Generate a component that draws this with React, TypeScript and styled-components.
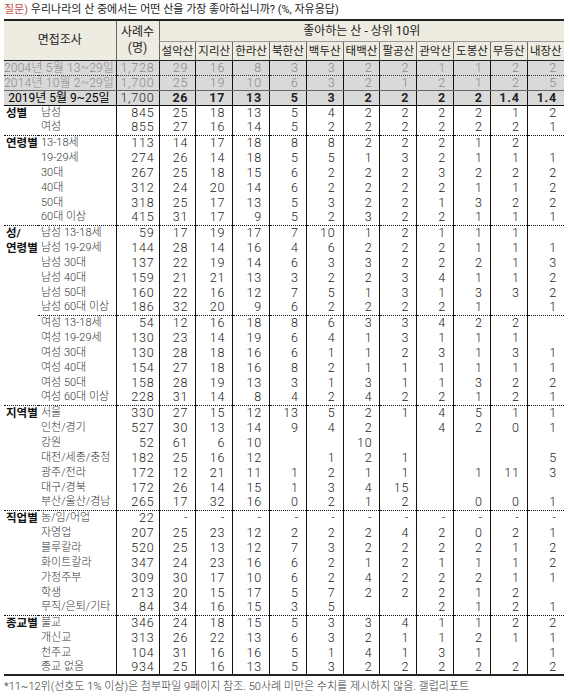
import styled, { createGlobalStyle } from "styled-components";

const GlobalStyle = createGlobalStyle`
  html, body {
    margin: 0;
    padding: 0;
    background: #fff;
  }
  body {
    font-family: Roboto, "Noto Sans CJK KR", sans-serif;
    color: #222;
  }
`;

const mountains = ["설악산", "지리산", "한라산", "북한산", "백두산", "태백산", "팔공산", "관악산", "도봉산", "무등산", "내장산"];

type Sep = "none" | "dot" | "dotSub";

interface DataRow {
  g?: string;
  s: string;
  n: string;
  v: string;
  sep?: Sep;
}

const trend = [
  { label: "2004년 5월 13~29일", n: "1,728", v: "29 16 8 3 3 2 2 1 1 2 2" },
  { label: "2014년 10월 2~29일", n: "1,700", v: "25 19 10 6 3 2 1 2 1 2 5" },
];

const current = { label: "2019년 5월 9~25일", n: "1,700", v: "26 17 13 5 3 2 2 2 2 1.4 1.4" };

const rows: DataRow[] = [
  { g: "성별", s: "남성", n: "845", v: "25 18 13 5 4 2 2 2 2 1 2" },
  { s: "여성", n: "855", v: "27 16 14 5 2 2 2 2 2 2 1" },
  { g: "연령별", s: "13-18세", n: "113", v: "14 17 18 8 8 2 2 2 1 2 _", sep: "dot" },
  { s: "19-29세", n: "274", v: "26 14 18 5 5 1 3 2 1 1 1" },
  { s: "30대", n: "267", v: "25 18 15 6 2 2 2 3 2 2 2" },
  { s: "40대", n: "312", v: "24 20 14 6 2 2 2 2 1 1 2" },
  { s: "50대", n: "318", v: "25 17 13 5 3 2 2 1 3 2 2" },
  { s: "60대 이상", n: "415", v: "31 17 9 5 2 3 2 2 1 1 1" },
  { g: "성/", s: "남성 13-18세", n: "59", v: "17 19 17 7 10 1 2 1 1 1 _", sep: "dot" },
  { g: "연령별", s: "남성 19-29세", n: "144", v: "28 14 16 4 6 2 2 2 1 1 1" },
  { s: "남성 30대", n: "137", v: "22 19 14 6 3 3 2 2 2 1 3" },
  { s: "남성 40대", n: "159", v: "21 21 13 3 2 2 3 4 1 1 2" },
  { s: "남성 50대", n: "160", v: "22 16 12 7 5 1 3 1 3 3 2" },
  { s: "남성 60대 이상", n: "186", v: "32 20 9 6 2 2 2 2 1 _ 1" },
  { s: "여성 13-18세", n: "54", v: "12 16 18 8 6 3 3 4 2 2 _", sep: "dotSub" },
  { s: "여성 19-29세", n: "130", v: "23 14 19 6 4 1 3 1 1 1 _" },
  { s: "여성 30대", n: "130", v: "28 18 16 6 1 1 2 3 1 3 1" },
  { s: "여성 40대", n: "154", v: "27 18 16 8 2 1 1 1 1 1 1" },
  { s: "여성 50대", n: "158", v: "28 19 13 3 1 3 1 1 3 2 2" },
  { s: "여성 60대 이상", n: "228", v: "31 14 8 4 2 4 2 2 1 2 1" },
  { g: "지역별", s: "서울", n: "330", v: "27 15 12 13 5 2 1 4 5 1 1", sep: "dot" },
  { s: "인천/경기", n: "527", v: "30 13 14 9 4 2 _ 4 2 0 1" },
  { s: "강원", n: "52", v: "61 6 10 _ _ 10 _ _ _ _ _" },
  { s: "대전/세종/충청", n: "182", v: "25 16 12 _ 1 2 1 _ _ _ 5" },
  { s: "광주/전라", n: "172", v: "12 21 11 1 2 1 1 _ 1 11 3" },
  { s: "대구/경북", n: "172", v: "26 14 15 1 3 4 15 _ _ _ _" },
  { s: "부산/울산/경남", n: "265", v: "17 32 16 0 2 1 2 _ 0 0 1" },
  { g: "직업별", s: "농/임/어업", n: "22", v: "- - - - - - - - - - -", sep: "dot" },
  { s: "자영업", n: "207", v: "25 23 12 2 2 2 4 2 0 2 1" },
  { s: "블루칼라", n: "520", v: "25 13 12 7 3 2 2 2 2 1 2" },
  { s: "화이트칼라", n: "347", v: "24 23 16 6 2 1 2 1 1 1 2" },
  { s: "가정주부", n: "309", v: "30 17 10 6 2 4 2 2 2 1 1" },
  { s: "학생", n: "213", v: "20 15 17 5 7 2 2 2 1 2 _" },
  { s: "무직/은퇴/기타", n: "84", v: "34 16 15 3 5 _ _ 2 1 2 1" },
  { g: "종교별", s: "불교", n: "346", v: "24 18 15 5 3 3 4 1 1 2 2", sep: "dot" },
  { s: "개신교", n: "313", v: "26 22 13 6 3 2 1 1 2 1 1" },
  { s: "천주교", n: "104", v: "31 16 16 5 1 4 1 3 1 _ 1" },
  { s: "종교 없음", n: "934", v: "25 16 13 5 3 2 2 2 2 2 2" },
];

const cells = (v: string) => v.split(" ").map((x) => (x === "_" ? "" : x));

const Page = styled.div`
  width: 568px;
  padding: 0 4px;
  box-sizing: border-box;
`;

const Title = styled.div`
  height: 19px;
  line-height: 19px;
  font-size: 11px;
  color: #222;
  white-space: nowrap;
`;

const Question = styled.span`
  color: #c0504d;
`;

const Table = styled.table`
  width: 560px;
  table-layout: fixed;
  border-collapse: collapse;
  border-top: 2px solid #222;
  border-bottom: 2px solid #222;
`;

const HeadCell = styled.th<{ $edge?: boolean; $under?: "soft" | "hard" }>`
  background: #eeece1;
  font-weight: 400;
  font-size: 11.5px;
  color: #222;
  padding: 0;
  text-align: center;
  line-height: 14px;
  white-space: nowrap;
  border-left: ${(p) => (p.$edge ? "none" : "1px solid #666")};
  border-bottom: ${(p) => (p.$under === "soft" ? "1px solid #999" : p.$under === "hard" ? "1px solid #222" : "none")};
`;

const BigHead = styled(HeadCell)`
  font-size: 12px;
  line-height: 16px;
`;

const TopHeadRow = styled.tr`
  height: 21px;
`;

const NameRow = styled.tr`
  height: 19px;
`;

const TrendRow = styled.tr<{ $line: "dotted" | "soft" | "hard" }>`
  height: 15px;
  background: #d9d9d9;
  & > td {
    border-bottom: ${(p) =>
      p.$line === "dotted" ? "1px dotted #333" : p.$line === "soft" ? "1px solid #666" : "1px solid #111"};
  }
`;

const TrendLabel = styled.td<{ $current?: boolean }>`
  padding: 0 ${(p) => (p.$current ? 6 : 3)}px 0 0;
  text-align: right;
  font-size: 12px;
  line-height: 14px;
  letter-spacing: ${(p) => (p.$current ? 0 : 0.2)}px;
  white-space: nowrap;
  color: ${(p) => (p.$current ? "#000" : "#8a8a8a")};
  font-weight: ${(p) => (p.$current ? 400 : 300)};
`;

const Num = styled.td<{ $bold?: boolean; $muted?: boolean; $wide?: boolean }>`
  padding: 0 ${(p) => (p.$wide ? 4 : 7)}px 0 0;
  text-align: right;
  font-size: 12.5px;
  letter-spacing: 0.8px;
  line-height: 14px;
  white-space: nowrap;
  border-left: 1px solid #111;
  color: ${(p) => (p.$muted ? "#8a8a8a" : "#222")};
  font-weight: ${(p) => (p.$bold ? 700 : 300)};
`;

const Row = styled.tr<{ $sep: Sep }>`
  height: 15px;
  & > td {
    border-top: ${(p) => (p.$sep === "dot" ? "1px dotted #111" : "none")};
  }
  & > td:not(:first-child) {
    border-top: ${(p) => (p.$sep === "none" ? "none" : "1px dotted #111")};
  }
`;

const GroupLabel = styled.td`
  padding: 0 0 0 2px;
  font-size: 11.5px;
  font-weight: 700;
  line-height: 14px;
  color: #111;
  white-space: nowrap;
`;

const SubLabel = styled.td`
  padding: 0 0 0 3px;
  font-size: 11px;
  font-weight: 300;
  line-height: 14px;
  color: #333;
  white-space: nowrap;
`;

const Footer = styled.div`
  margin-top: 3px;
  font-size: 11px;
  font-weight: 300;
  line-height: 16px;
  color: #333;
  white-space: nowrap;
`;

export default function App() {
  return (
    <Page>
      <GlobalStyle />
      <Title>
        <Question>질문)</Question> 우리나라의 산 중에서는 어떤 산을 가장 좋아하십니까? (%, 자유응답)
      </Title>
      <Table>
        <colgroup>
          <col style={{ width: 34 }} />
          <col style={{ width: 78 }} />
          <col style={{ width: 43 }} />
          {mountains.map((m) => (
            <col key={m} />
          ))}
        </colgroup>
        <thead>
          <TopHeadRow>
            <BigHead colSpan={2} rowSpan={2} $edge $under="hard">
              면접조사
            </BigHead>
            <BigHead rowSpan={2} $under="hard">
              사례수
              <br />
              (명)
            </BigHead>
            <BigHead colSpan={11} $under="soft">
              좋아하는 산 - 상위 10위
            </BigHead>
          </TopHeadRow>
          <NameRow>
            {mountains.map((m) => (
              <HeadCell key={m} $under="hard">
                {m}
              </HeadCell>
            ))}
          </NameRow>
        </thead>
        <tbody>
          {trend.map((t, i) => (
            <TrendRow key={t.label} $line={i === 0 ? "dotted" : "soft"}>
              <TrendLabel colSpan={2}>{t.label}</TrendLabel>
              <Num $muted $wide>
                {t.n}
              </Num>
              {cells(t.v).map((c, j) => (
                <Num key={j} $muted>
                  {c}
                </Num>
              ))}
            </TrendRow>
          ))}
          <TrendRow $line="hard">
            <TrendLabel colSpan={2} $current>
              {current.label}
            </TrendLabel>
            <Num $wide>{current.n}</Num>
            {cells(current.v).map((c, j) => (
              <Num key={j} $bold>
                {c}
              </Num>
            ))}
          </TrendRow>
          {rows.map((r) => (
            <Row key={r.s + r.n} $sep={r.sep ?? "none"}>
              <GroupLabel>{r.g ?? ""}</GroupLabel>
              <SubLabel>{r.s}</SubLabel>
              <Num $wide>{r.n}</Num>
              {cells(r.v).map((c, j) => (
                <Num key={j}>{c}</Num>
              ))}
            </Row>
          ))}
        </tbody>
      </Table>
      <Footer>*11~12위(선호도 1% 이상)은 첨부파일 9페이지 참조. 50사례 미만은 수치를 제시하지 않음. 갤럽리포트</Footer>
    </Page>
  );
}
